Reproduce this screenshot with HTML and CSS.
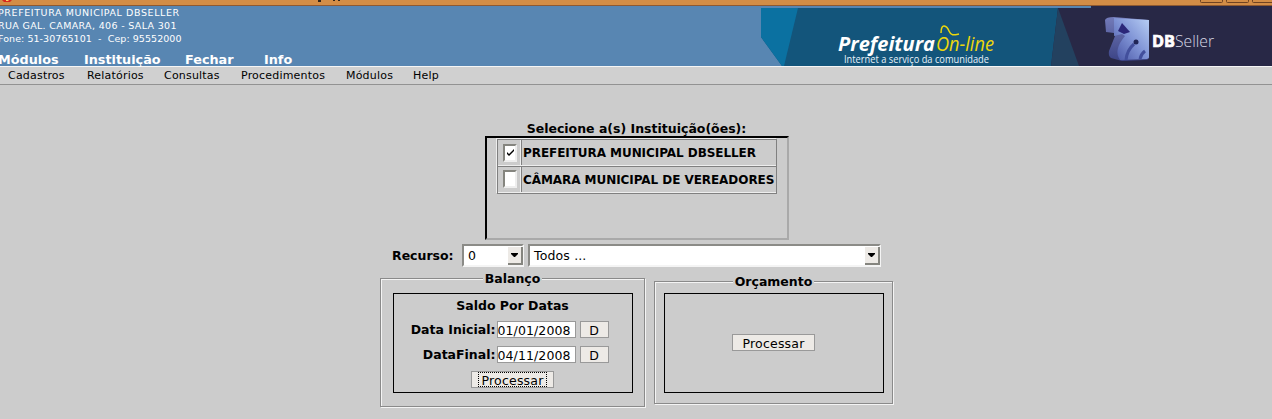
FILE: index.html
```html
<!DOCTYPE html>
<html lang="pt-BR">
<head>
<meta charset="utf-8">
<title>Prefeitura On-line</title>
<link rel="stylesheet" href="styles.css">
</head>
<body>
<div class="titlebar">
  <svg width="1272" height="6" viewBox="0 0 1272 6">
    <path d="M2 0h10l-2 2H4z" fill="#d8281c"/><path d="M6 0h3l-1 1H6z" fill="#ffd060"/>
    <path d="M320 0v1h-2M334 0v1M339 0v1" stroke="#33251a" fill="none" stroke-width="2"/>
    <path d="M1200.500 0v1.500q0 1 1 1h20q1 0 1-1V0M1226.500 0v1.500q0 1 1 1h20q1 0 1-1V0M1252.500 0v1.500q0 1 1 1h20" fill="none" stroke="#704321"/>
  </svg>
</div>
<header class="header">
  <div class="left">
    <address class="org"><span class="city">PREFEITURA MUNICIPAL DBSELLER</span><br><span class="street">RUA GAL. CAMARA, 406 - SALA 301</span><br><span class="phone">Fone: 51-30765101 &nbsp;- &nbsp;Cep: 95552000</span></address>
    <nav class="main-nav"><a>Módulos</a><a>Instituição</a><a>Fechar</a><a>Info</a></nav>
  </div>
  <svg class="banner" width="511" height="60" viewBox="0 0 511 60">
    <defs>
      <linearGradient id="cube" x1="0" y1="1" x2="1" y2="0"><stop stop-color="#4652a2"/><stop offset=".5" stop-color="#7f93d5"/><stop offset="1" stop-color="#b8cff5"/></linearGradient>
      <linearGradient id="side" x1="0" y1="0" x2="0" y2="1"><stop stop-color="#737bb9"/><stop offset="1" stop-color="#3b4385"/></linearGradient>
    </defs>
    <path d="M0 2H330V60H21L0 31z" fill="#13557b"/>
    <path d="M0 2H37L23 60H21L0 31z" fill="#0b71a1"/>
    <path d="M297 2h214v58H290z" fill="#282846"/>
    <path d="M297 2L318 60H290z" fill="#23415f"/>
    <path d="M297 0h214v3H297z" fill="#282846"/>
    <path d="M0 0h330v2H0z" fill="#5886b2"/>
    <path d="M344 14q1-3 9-3l35 3v37q0 3-4 3l-23 1-11-3q-3-2-2-7l6-15-1-3-8-1z" fill="url(#side)"/>
    <path d="M353 12l35 2v37q0 2-4 2l-25 1q-7-10 5-24l-3-2-8 2z" fill="url(#cube)"/>
    <path d="M361 17l8 9-6 2-6-3z" fill="#2b2779"/>
    <path d="M373 38q-7 6-8 16M384 45q-4 3-5 8" fill="none" stroke="#424f9c" stroke-width="3"/>
    <circle cx="375" cy="36" r="2.500" fill="#202657"/>
    <text class="brand white" x="77" y="45" textLength="97" lengthAdjust="spacingAndGlyphs">Prefeitura</text>
    <text class="brand yellow" x="175" y="45" textLength="58" lengthAdjust="spacingAndGlyphs">On-line</text>
    <path d="M180 27c0-11 6-7 8-2s5 4 10 3" fill="none" stroke="#edd70b" stroke-width="1.500"/>
    <text class="tagline" x="83" y="56.500" textLength="145" lengthAdjust="spacingAndGlyphs">Internet a serviço da comunidade</text>
    <text class="db" x="391" y="41" textLength="23" lengthAdjust="spacingAndGlyphs">DB</text>
    <text class="seller" x="414" y="41" textLength="39" lengthAdjust="spacingAndGlyphs">Seller</text>
  </svg>
</header>
<nav class="menubar"><a>Cadastros</a><a>Relatórios</a><a>Consultas</a><a>Procedimentos</a><a>Módulos</a><a>Help</a></nav>
<main class="content">
  <h1 class="caption">Selecione a(s) Instituição(ões):</h1>
  <section class="listbox">
    <div class="list">
      <div class="entry"><span class="check-cell"><span class="check"><svg width="9" height="9" viewBox="0 0 9 9"><path d="M1 3v2l2 2 5-5V0L3 5z"/></svg></span></span><span class="name">PREFEITURA MUNICIPAL DBSELLER</span></div>
      <div class="entry"><span class="check-cell"><span class="check"></span></span><span class="name">CÂMARA MUNICIPAL DE VEREADORES</span></div>
    </div>
  </section>
  <div class="resource">
    <b>Recurso:</b>
    <div class="select small"><span>0</span><i class="drop"><svg width="7" height="4" viewBox="0 0 7 4"><path d="M0 0h7v1L4 4H3L0 1z"/></svg></i></div>
    <div class="select wide"><span>Todos ...</span><i class="drop"><svg width="7" height="4" viewBox="0 0 7 4"><path d="M0 0h7v1L4 4H3L0 1z"/></svg></i></div>
  </div>
  <div class="panels">
    <section class="panel balance">
      <h2><span>Balanço</span></h2>
      <div class="inner">
        <h3>Saldo Por Datas</h3>
        <div class="date-row"><b>Data Inicial:</b><span class="date">01/01/2008</span><span class="button d">D</span></div>
        <div class="date-row"><b>DataFinal:</b><span class="date">04/11/2008</span><span class="button d">D</span></div>
        <span class="button process"><span class="focus">Processar</span></span>
      </div>
    </section>
    <section class="panel budget">
      <h2><span>Orçamento</span></h2>
      <div class="inner"><span class="button process">Processar</span></div>
    </section>
  </div>
</main>
</body>
</html>
```
FILE: styles.css
```css
* { box-sizing: border-box; }
body { margin: 0; width: 1272px; height: 419px; overflow: hidden; background: #ccc; color: #000; font: 12.500px/16px "DejaVu Sans", sans-serif; }
svg { display: block; }
h1, h2, h3 { margin: 0; font-size: 12.500px; line-height: 16px; text-align: center; }
.titlebar { height: 6px; background: #d38d46; border-bottom: 1px solid #8e5931; }
.header { height: 60px; background: #5886b2; color: #fff; display: flex; justify-content: space-between; }
.left { width: 500px; margin-left: -2px; }
.org { height: 46px; font: 9.500px/13px "DejaVu Sans", sans-serif; white-space: nowrap; }
.city { letter-spacing: .6px; }
.street { letter-spacing: .34px; }
.phone { letter-spacing: .06px; }
.main-nav { display: grid; grid-template-columns: 86px 101px 79px 60px; font-weight: bold; font-size: 12.800px; line-height: 16px; }
.brand { font: italic bold 20px "Open Sans", sans-serif; }
.white { fill: #fff; }
.yellow { fill: #edd70b; font-weight: normal; }
.tagline { font: 10px "Open Sans", sans-serif; fill: #e8f2fa; }
.db { font: bold 16.500px "Open Sans", sans-serif; fill: #fff; stroke: #fff; stroke-width: .7px; }
.seller { font: 300 17px "Open Sans", sans-serif; fill: #d8d8e5; }
.menubar { height: 19px; border-top: 1px solid #f5f5f5; border-bottom: 1px solid #929292; background: #d0d0d0; display: grid; grid-template-columns: 79px 77px 77px 105px 67px 60px; padding-left: 8px; font-size: 11px; line-height: 17px; letter-spacing: .2px; }
.content { display: flex; flex-direction: column; align-items: center; padding: 36px 0 0; }
.caption { height: 15px; margin-left: 1px; }
.listbox { width: 304px; height: 104px; margin-left: 2px; border: 2px solid; border-color: #000 #a9a9a9 #a9a9a9 #000; padding: 1px 10px; }
.list { width: 280px; border: 1px solid #808080; box-shadow: -1px -1px #eee; }
.entry { height: 27px; display: flex; border-bottom: 1px solid #eee; }
.entry:first-child { height: 26px; }
.entry + .entry { border-top: 1px solid #808080; }
.check-cell { flex: none; width: 23px; border-right: 1px solid #eee; padding: 4px 0 0 5px; }
.entry + .entry .check-cell { padding-top: 3px; }
.check { width: 14px; height: 18px; display: flex; align-items: center; justify-content: center; background: #fff; border: 2px solid; border-color: #85857f #eee #eee #85857f; }
.name { border-left: 1px solid #808080; padding-left: 1px; font-size: 12px; letter-spacing: -.06px; line-height: 26px; font-weight: bold; white-space: nowrap; }
.resource { width: 490px; height: 23px; margin-top: 4px; margin-left: 2px; display: flex; line-height: 24px; }
.resource b { width: 70px; }
.select { height: 23px; display: flex; justify-content: space-between; background: #fff; border: 2px solid; border-color: #8b8b87 #f4f4f4 #f4f4f4 #8b8b87; padding-left: 4px; line-height: 20px; }
.select.small { width: 62px; margin-right: 4px; }
.select.wide { width: 353px; letter-spacing: .15px; }
.drop { width: 15px; height: 18px; margin: 1px -1px 0 0; background: #edeae6; border: solid #85857f; border-width: 0 2px 2px 0; display: flex; align-items: center; justify-content: center; }
.panels { width: 514px; margin-left: 2px; margin-top: 4px; display: flex; gap: 9px; align-items: flex-start; }
.panel { --line: #8a8a8a; display: flex; flex-direction: column; align-items: center; border: 1px solid var(--line); box-shadow: 1px 1px #f4f4f4, inset 1px 1px #f4f4f4; }
.panel h2 { height: 16px; margin-top: -8px; }
.panel h2 span { display: block; background: #ccc; padding: 0 2px; }
.balance { width: 265px; height: 129px; margin-top: 7px; }
.budget { width: 239px; height: 123px; margin-top: 10px; }
.inner { border: 1px solid #000; height: 100px; }
.balance .inner { width: 240px; margin-top: 6px; padding-top: 4px; display: flex; flex-direction: column; align-items: center; }
.budget .inner { width: 220px; margin-top: 3px; padding-bottom: 1px; display: flex; align-items: center; justify-content: center; }
.date-row { width: 238px; height: 25px; display: flex; align-items: center; }
h3 + .date-row { margin-top: 3px; }
.date-row b { width: 102px; text-align: right; }
.date { width: 79px; height: 17px; margin: 0 4px 0 1px; border: 1px solid #999; background: #fff; padding-left: 0; line-height: 18px; letter-spacing: .1px; white-space: nowrap; }
.button { display: flex; align-items: center; justify-content: center; height: 17px; border: 1px solid #999; background: #edeae6; line-height: 17px; padding-top: 2px; }
.button.d { width: 29px; }
.process { width: 83px; letter-spacing: .2px; }
.balance .process { margin-top: 4px; padding-top: 0; }
.focus { width: 69px; height: 15px; border: 1px dotted #000; text-align: center; line-height: 15px; }
```
